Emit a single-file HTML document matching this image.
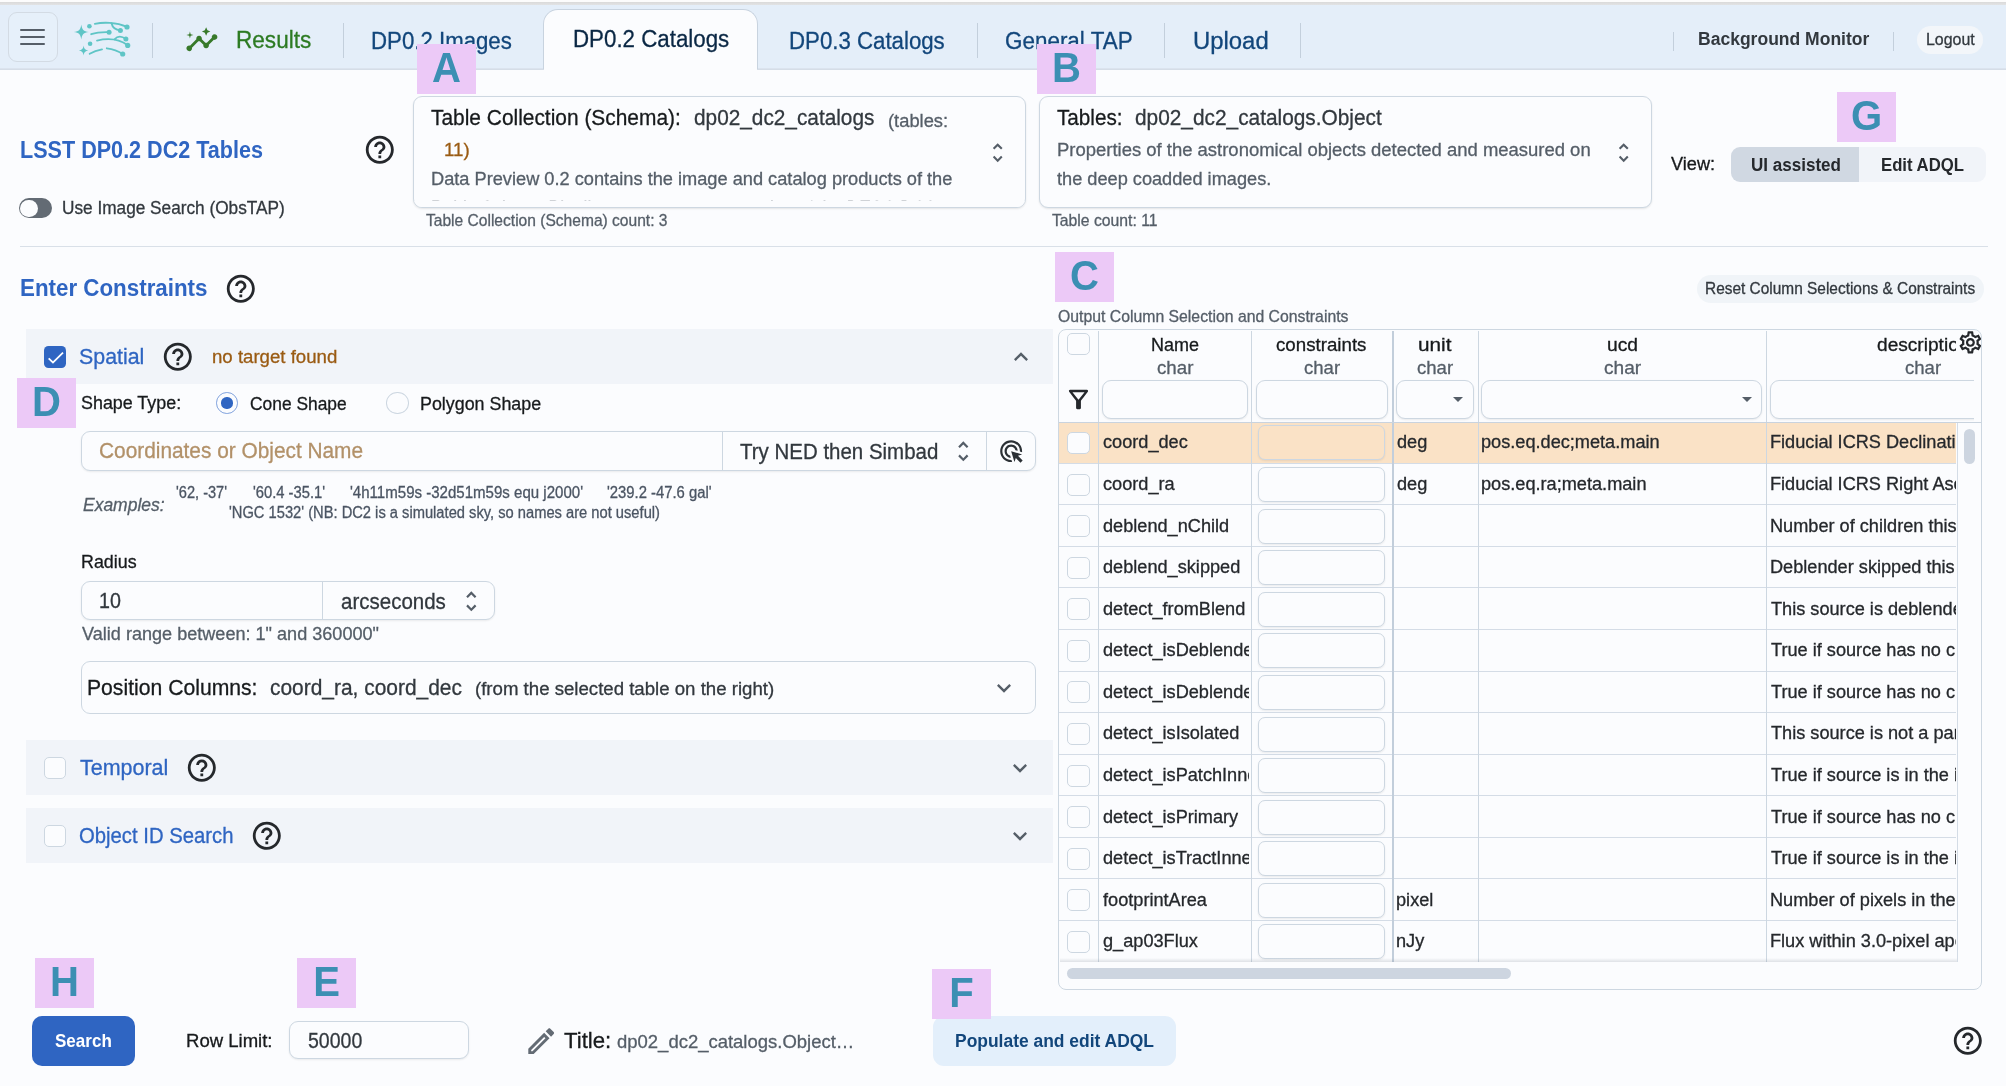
<!DOCTYPE html>
<html lang="en"><head><meta charset="utf-8"><title>LSST DP0.2 DC2 Tables</title>
<style>
html,body{margin:0;padding:0}
body{width:2006px;height:1086px;overflow:hidden;position:relative;background:#fbfcfe;font-family:"Liberation Sans",sans-serif}
.t{position:absolute;white-space:nowrap;line-height:1;transform-origin:0 0;display:block;-webkit-text-stroke:.300px currentColor}
.b,.i{position:absolute;display:block}
#topstrip{position:absolute;z-index:5;left:0;top:0;width:2006px;height:5px;background:linear-gradient(to bottom,#fcfcfc 0,#fcfcfc 1.800px,#dadada 2.200px,#e1e2e3 4.600px,#e4eef9 5px)}
#hdr{position:absolute;left:0;top:4px;width:2006px;height:64px;background:#e4eef9;border-bottom:1px solid #dbe3ee;box-sizing:content-box}
#hdr>*{margin-top:-4px}
#main{position:absolute;left:0;top:0;width:2006px;height:1086px;will-change:transform}
#hdr{will-change:transform}
.card{position:absolute;box-sizing:border-box;border:1px solid #cdd7e1;border-radius:9px;background:#fbfcfe;overflow:hidden;box-shadow:0 1px 2px rgba(21,21,21,.10)}
#tbl{position:absolute;box-sizing:border-box;border:1px solid #cdd7e1;border-radius:8px;background:#fbfcfe;overflow:hidden}
.lbl{position:absolute;background:#ecc9f7}
.lbl span{position:absolute;left:0;width:100%;text-align:center;font-weight:700;font-size:42.200px;line-height:1;color:#3c8fb3;transform:scaleX(.950);transform-origin:50% 50%}
</style></head>
<body>
<div id="topstrip"></div>
<header id="hdr">
<div class="b" style="left:8px;top:12px;width:50px;height:50px;border:1px solid #d3dbe4;border-radius:9px;box-sizing:border-box;background:#e6f0fa"></div>
<div class="b" style="left:20px;top:29px;width:25px;height:2.4px;background:#555e68;border-radius:1px"></div>
<div class="b" style="left:20px;top:35.8px;width:25px;height:2.4px;background:#555e68;border-radius:1px"></div>
<div class="b" style="left:20px;top:42.9px;width:25px;height:2.4px;background:#555e68;border-radius:1px"></div>
<svg class="i" style="left:64px;top:14px" width="80" height="50" viewBox="64 14 80 50" fill="none" stroke="#5fc5c6" stroke-width="1.850" stroke-linecap="round">
<path fill="#5fc5c6" stroke="none" d="M81.3 24.5 C82.05 29.8 83.5 31.25 88.8 32 C83.5 32.75 82.05 34.2 81.3 39.5 C80.55 34.2 79.1 32.75 73.8 32 C79.1 31.25 80.55 29.8 81.3 24.5Z"/>
<path fill="#5fc5c6" stroke="none" d="M83.6 45.6 C84.2 49 85.2 50 88.4 50.6 C85.2 51.2 84.2 52.2 83.6 55.6 C83 52.2 82 51.2 78.8 50.6 C82 50 83 49 83.6 45.6Z"/>
<circle cx="89.400" cy="26.300" r="2.300" fill="#5fc5c6" stroke="none"/>
<circle cx="90.100" cy="43.700" r="2.300" fill="#5fc5c6" stroke="none"/>
<path d="M94.800 23.900 C103 22 116 22 127 26.900"/><circle cx="127" cy="27" r="2.600" fill="#5fc5c6" stroke="none"/>
<path d="M111.500 23.200 C112.500 27.500 115 29.800 120.400 30.400"/><circle cx="120.400" cy="30.400" r="2.500" fill="#5fc5c6" stroke="none"/>
<path d="M91.200 34.200 C96 32.600 103 32 109 32.200"/><circle cx="109.100" cy="32.300" r="2.500" fill="#5fc5c6" stroke="none"/>
<path d="M97 40.600 C107 38.200 119 39 127.700 45.300"/><circle cx="127.700" cy="45.400" r="2.600" fill="#5fc5c6" stroke="none"/>
<path d="M114.500 39.300 C117.500 36 121.500 35.800 125.900 39"/><circle cx="125.900" cy="39.100" r="2.500" fill="#5fc5c6" stroke="none"/>
<path d="M89.700 53.700 C93.500 51.500 97.500 50.200 102 49.400"/>
<path d="M106.800 48.300 C112.500 49 118 50.800 122.700 54"/><circle cx="122.700" cy="54" r="2.600" fill="#5fc5c6" stroke="none"/>
</svg>
<div class="b" style="left:151.9px;top:22.5px;width:1px;height:35.5px;background:#c3cfdc"></div>
<div class="b" style="left:342.9px;top:22.5px;width:1px;height:35.5px;background:#c3cfdc"></div>
<div class="b" style="left:976.9px;top:23px;width:1px;height:35px;background:#c3cfdc"></div>
<div class="b" style="left:1163.9px;top:23px;width:1px;height:35px;background:#c3cfdc"></div>
<div class="b" style="left:1299.9px;top:23px;width:1px;height:35px;background:#c3cfdc"></div>
<div class="b" style="left:1672.9px;top:32px;width:1px;height:18.6px;background:#c3cfdc"></div>
<div class="b" style="left:1892.9px;top:32px;width:1px;height:18.6px;background:#c3cfdc"></div>
<svg class="i" style="left:185.1px;top:23.2px" width="33.8" height="33.8" viewBox="0 0 24 24" fill="#37792a" ><path d="M21 8c-1.450 0-2.260 1.440-1.930 2.510l-3.550 3.560c-.3-.09-.74-.09-1.040 0l-2.550-2.550C12.270 10.450 11.460 9 10 9c-1.450 0-2.270 1.440-1.930 2.520l-4.560 4.550C2.440 15.740 1 16.550 1 18c0 1.100.9 2 2 2 1.450 0 2.260-1.440 1.930-2.510l4.550-4.560c.3.090.74.090 1.040 0l2.550 2.550C12.730 16.550 13.540 18 15 18c1.450 0 2.270-1.440 1.930-2.520l3.560-3.550c1.070.33 2.510-.48 2.510-1.930 0-1.100-.9-2-2-2z"/><path d="M15 9l.94-2.070L18 6l-2.060-.93L15 3l-.92 2.070L12 6l2.080.93z"/><path d="M3.500 11L4 9l2-.5L4 8l-.5-2L3 8l-2 .5L3 9z"/></svg>
<span class="t" style="left:235.76px;top:28.43px;font-size:24.05px;color:#2c7a22;transform:scaleX(0.9386);">Results</span>
<span class="t" style="left:371.18px;top:28.53px;font-size:24.05px;color:#12467b;transform:scaleX(0.9244);">DP0.2 Images</span>
<div class="b" style="left:543px;top:9px;width:215px;height:61px;background:#fbfcfe;border:1px solid #c8d3df;border-bottom:none;border-radius:15px 15px 0 0;box-sizing:border-box"></div>
<span class="t" style="left:572.57px;top:27.33px;font-size:24.05px;color:#0a2744;transform:scaleX(0.9277);">DP0.2 Catalogs</span>
<span class="t" style="left:788.58px;top:28.53px;font-size:24.05px;color:#12467b;transform:scaleX(0.9247);">DP0.3 Catalogs</span>
<span class="t" style="left:1004.57px;top:28.53px;font-size:24.05px;color:#12467b;transform:scaleX(0.9329);">General TAP</span>
<span class="t" style="left:1192.71px;top:28.53px;font-size:24.05px;color:#12467b;transform:scaleX(0.9928);">Upload</span>
<span class="t" style="left:1697.74px;top:29.73px;font-size:18.25px;color:#32383e;transform:scaleX(0.9603);font-weight:700;-webkit-text-stroke:0;">Background Monitor</span>
<div class="b" style="left:1916.5px;top:26px;width:66px;height:27.6px;background:#f3f6fa;border-radius:14px"></div>
<span class="t" style="left:1925.58px;top:31.10px;font-size:17.3px;color:#32383e;transform:scaleX(0.9221);">Logout</span>
</header>
<div class="b" style="left:0px;top:69px;width:544px;height:1px;background:#d5dde7"></div>
<div class="b" style="left:757px;top:69px;width:1249px;height:1px;background:#d5dde7"></div>
<main id="main">
<span class="t" style="left:20.10px;top:137.62px;font-size:24.05px;color:#2f65c2;transform:scaleX(0.8974);font-weight:700;-webkit-text-stroke:0;">LSST DP0.2 DC2 Tables</span>
<svg class="i" style="left:363.2px;top:133.2px" width="33.6" height="33.6" viewBox="0 0 24 24" fill="#25282c" ><path d="M11 18h2v-2h-2v2zm1-16C6.48 2 2 6.48 2 12s4.48 10 10 10 10-4.48 10-10S17.52 2 12 2zm0 18c-4.41 0-8-3.59-8-8s3.59-8 8-8 8 3.59 8 8-3.59 8-8 8zm0-14c-2.21 0-4 1.79-4 4h2c0-1.1.9-2 2-2s2 .9 2 2c0 2-3 1.75-3 5h2c0-2.25 3-2.5 3-5 0-2.21-1.79-4-4-4z"/></svg>
<div class="b" style="left:19.4px;top:198.3px;width:32.5px;height:19.7px;background:#636b74;border-radius:10px"></div>
<div class="b" style="left:20.4px;top:199.5px;width:17.3px;height:17.3px;background:#fbfcfe;border-radius:50%"></div>
<span class="t" style="left:61.76px;top:198.72px;font-size:18.25px;color:#32383e;transform:scaleX(0.9440);">Use Image Search (ObsTAP)</span>
<section class="card" style="left:413px;top:96px;width:612.500px;height:111.500px">
<span class="t" style="left:17.00px;top:9.98px;font-size:21.74px;color:#171a1c;transform:scaleX(0.9618);">Table Collection (Schema):</span>
<span class="t" style="left:280.00px;top:9.98px;font-size:21.74px;color:#32383e;transform:scaleX(0.9568);">dp02_dc2_catalogs</span>
<span class="t" style="left:473.50px;top:14.72px;font-size:18.25px;color:#555e68;transform:scaleX(1.0039);">(tables:</span>
<span class="t" style="left:29.68px;top:44.42px;font-size:18.25px;color:#9a5b13;transform:scaleX(1.0242);">11)</span>
<span class="t" style="left:16.80px;top:72.72px;font-size:18.25px;color:#555e68;transform:scaleX(0.9979);">Data Preview 0.2 contains the image and catalog products of the</span>
<span class="t" style="left:16.54px;top:102.42px;font-size:18.25px;color:#555e68;transform:scaleX(0.9575);">Rubin Science Pipelines run on a reprocessing of the DESC DC2</span>
<div class="b" style="left:0px;top:104px;width:612px;height:7px;background:#fbfcfe"></div>
<svg class="i" style="left:570.8px;top:42.8px" width="25.4" height="25.4" viewBox="0 0 24 24" fill="#555e68" ><path d="M12 5.83 15.17 9l1.41-1.41L12 3 7.41 7.59 8.83 9 12 5.83zm0 12.34L8.83 15l-1.41 1.41L12 21l4.59-4.59L15.17 15 12 18.17z"/></svg>
</section>
<span class="t" style="left:426.40px;top:212.90px;font-size:15.9px;color:#555e68;transform:scaleX(0.9798);">Table Collection (Schema) count: 3</span>
<section class="card" style="left:1039px;top:96px;width:613px;height:111.500px">
<span class="t" style="left:16.80px;top:9.98px;font-size:21.74px;color:#171a1c;transform:scaleX(0.9510);">Tables:</span>
<span class="t" style="left:94.80px;top:9.98px;font-size:21.74px;color:#32383e;transform:scaleX(0.9587);">dp02_dc2_catalogs.Object</span>
<span class="t" style="left:16.99px;top:44.22px;font-size:18.25px;color:#555e68;transform:scaleX(1.0116);">Properties of the astronomical objects detected and measured on</span>
<span class="t" style="left:17.00px;top:73.22px;font-size:18.25px;color:#555e68;transform:scaleX(0.9961);">the deep coadded images.</span>
<svg class="i" style="left:570.9px;top:42.8px" width="25.4" height="25.4" viewBox="0 0 24 24" fill="#555e68" ><path d="M12 5.83 15.17 9l1.41-1.41L12 3 7.41 7.59 8.83 9 12 5.83zm0 12.34L8.83 15l-1.41 1.41L12 21l4.59-4.59L15.17 15 12 18.17z"/></svg>
</section>
<span class="t" style="left:1051.50px;top:212.90px;font-size:15.9px;color:#555e68;transform:scaleX(0.9900);">Table count: 11</span>
<span class="t" style="left:1671.00px;top:155.03px;font-size:18.25px;color:#171a1c;transform:scaleX(0.9948);">View:</span>
<div class="b" style="left:1731px;top:147.3px;width:128px;height:34.4px;background:#d0d8e2;border-radius:9px 0 0 9px"></div>
<div class="b" style="left:1859px;top:147.3px;width:127px;height:34.4px;background:#f1f4f9;border-radius:0 9px 9px 0"></div>
<span class="t" style="left:1750.57px;top:155.72px;font-size:18.25px;color:#25282c;transform:scaleX(0.9340);font-weight:700;-webkit-text-stroke:0;">UI assisted</span>
<span class="t" style="left:1881.28px;top:155.72px;font-size:18.25px;color:#25282c;transform:scaleX(0.9157);font-weight:700;-webkit-text-stroke:0;">Edit ADQL</span>
<div class="b" style="left:20px;top:245.7px;width:1968px;height:1px;background:#d9e0e8"></div>
<span class="t" style="left:20.07px;top:276.43px;font-size:24.05px;color:#2f65c2;transform:scaleX(0.9292);font-weight:700;-webkit-text-stroke:0;">Enter Constraints</span>
<svg class="i" style="left:224.2px;top:272.2px" width="33.6" height="33.6" viewBox="0 0 24 24" fill="#25282c" ><path d="M11 18h2v-2h-2v2zm1-16C6.48 2 2 6.48 2 12s4.48 10 10 10 10-4.48 10-10S17.52 2 12 2zm0 18c-4.41 0-8-3.59-8-8s3.59-8 8-8 8 3.59 8 8-3.59 8-8 8zm0-14c-2.21 0-4 1.79-4 4h2c0-1.1.9-2 2-2s2 .9 2 2c0 2-3 1.75-3 5h2c0-2.25 3-2.5 3-5 0-2.21-1.79-4-4-4z"/></svg>
<div class="b" style="left:26px;top:328.7px;width:1027px;height:55.3px;background:#f1f4f9"></div>
<div class="b" style="left:44px;top:346px;width:22px;height:22px;background:#2f65c2;border-radius:4.500px"></div>
<svg class="i" style="left:44.5px;top:346.5px" width="21.3" height="21.3" viewBox="0 0 24 24" fill="#fff" ><path d="M9 16.170 4.830 12l-1.420 1.410L9 19 21 7l-1.410-1.410z"/></svg>
<span class="t" style="left:79.00px;top:345.98px;font-size:21.74px;color:#2f65c2;transform:scaleX(0.9828);">Spatial</span>
<svg class="i" style="left:161.2px;top:340.2px" width="33.6" height="33.6" viewBox="0 0 24 24" fill="#25282c" ><path d="M11 18h2v-2h-2v2zm1-16C6.48 2 2 6.48 2 12s4.48 10 10 10 10-4.48 10-10S17.52 2 12 2zm0 18c-4.41 0-8-3.59-8-8s3.59-8 8-8 8 3.59 8 8-3.59 8-8 8zm0-14c-2.21 0-4 1.79-4 4h2c0-1.1.9-2 2-2s2 .9 2 2c0 2-3 1.75-3 5h2c0-2.25 3-2.5 3-5 0-2.21-1.79-4-4-4z"/></svg>
<span class="t" style="left:212.38px;top:348.43px;font-size:18.25px;color:#9a5b13;transform:scaleX(1.0205);">no target found</span>
<svg class="i" style="left:1006.6px;top:343px" width="28" height="28" viewBox="0 0 24 24" fill="#555e68" ><path d="M7.41 15.41 12 10.83l4.59 4.58L18 14l-6-6-6 6z"/></svg>
<span class="t" style="left:81.10px;top:393.73px;font-size:18.25px;color:#171a1c;transform:scaleX(0.9802);">Shape Type:</span>
<div class="b" style="left:216.2px;top:392.2px;width:21.6px;height:21.6px;border:1.300px solid #7ea0dc;border-radius:50%;box-sizing:border-box;background:#fbfcfe"></div>
<div class="b" style="left:221.4px;top:397.4px;width:11.2px;height:11.2px;background:#2f65c2;border-radius:50%"></div>
<span class="t" style="left:250.00px;top:394.93px;font-size:18.25px;color:#171a1c;transform:scaleX(0.9524);">Cone Shape</span>
<div class="b" style="left:386.2px;top:392.2px;width:22.5px;height:21.6px;border:1.300px solid #cdd7e1;border-radius:50%;box-sizing:border-box;background:#fbfcfe"></div>
<span class="t" style="left:420.02px;top:394.93px;font-size:18.25px;color:#171a1c;transform:scaleX(0.9784);">Polygon Shape</span>
<div class="b" style="left:81px;top:431px;width:955px;height:39.5px;border:1px solid #cdd7e1;border-radius:9px;box-sizing:border-box;background:#fbfcfe;box-shadow:0 1px 2px rgba(21,21,21,.08)"></div>
<div class="b" style="left:722px;top:431.5px;width:1px;height:38.5px;background:#cdd7e1"></div>
<div class="b" style="left:986px;top:431.5px;width:1px;height:38.5px;background:#cdd7e1"></div>
<span class="t" style="left:98.74px;top:439.98px;font-size:21.74px;color:#b29169;transform:scaleX(0.9587);">Coordinates or Object Name</span>
<span class="t" style="left:740.20px;top:440.98px;font-size:21.74px;color:#32383e;transform:scaleX(0.9418);">Try NED then Simbad</span>
<svg class="i" style="left:950px;top:438.4px" width="26.6" height="26.6" viewBox="0 0 24 24" fill="#555e68" ><path d="M12 5.83 15.17 9l1.41-1.41L12 3 7.41 7.59 8.83 9 12 5.83zm0 12.34L8.83 15l-1.41 1.41L12 21l4.59-4.59L15.17 15 12 18.17z"/></svg>
<svg class="i" style="left:998.2px;top:437.9px" width="26.3" height="26.3" viewBox="0 0 24 24" fill="#2b3035" ><path d="M11.710 17.990C8.530 17.840 6 15.220 6 12c0-3.310 2.690-6 6-6 3.220 0 5.840 2.530 5.990 5.710l-2.100-.630C15.480 9.310 13.890 8 12 8c-2.210 0-4 1.790-4 4 0 1.890 1.310 3.480 3.080 3.890l.630 2.100zM22 12c0 .3-.010.6-.040.9l-1.970-.590c.010-.1.010-.210.010-.310 0-4.420-3.580-8-8-8s-8 3.580-8 8 3.580 8 8 8c.1 0 .210 0 .310-.010l.590 1.970c-.3.030-.6.040-.9.040-5.520 0-10-4.480-10-10S6.480 2 12 2s10 4.480 10 10zm-3.770 4.260L22 15l-10-3 3 10 1.260-3.770 4.270 4.270 1.980-1.980-4.280-4.260z"/></svg>
<span class="t" style="left:83.00px;top:495.73px;font-size:18.25px;color:#555e68;transform:scaleX(0.9574);font-style:italic;">Examples:</span>
<span class="t" style="left:176.40px;top:484.95px;font-size:15.8px;color:#4b5563;transform:scaleX(0.9240);">'62, -37'</span>
<span class="t" style="left:253.00px;top:484.95px;font-size:15.8px;color:#4b5563;transform:scaleX(0.9332);">'60.4 -35.1'</span>
<span class="t" style="left:350.00px;top:484.95px;font-size:15.8px;color:#4b5563;transform:scaleX(0.9526);">'4h11m59s -32d51m59s equ j2000'</span>
<span class="t" style="left:606.90px;top:484.95px;font-size:15.8px;color:#4b5563;transform:scaleX(0.9380);">'239.2 -47.6 gal'</span>
<span class="t" style="left:228.80px;top:504.95px;font-size:15.8px;color:#4b5563;transform:scaleX(0.9305);">'NGC 1532' (NB: DC2 is a simulated sky, so names are not useful)</span>
<span class="t" style="left:81.02px;top:552.73px;font-size:18.25px;color:#171a1c;transform:scaleX(0.9787);">Radius</span>
<div class="b" style="left:81px;top:581px;width:414px;height:39px;border:1px solid #cdd7e1;border-radius:9px;box-sizing:border-box;background:#fbfcfe;box-shadow:0 1px 2px rgba(21,21,21,.08)"></div>
<div class="b" style="left:322px;top:581.5px;width:1px;height:38px;background:#cdd7e1"></div>
<span class="t" style="left:99.09px;top:590.60px;font-size:21.5px;color:#32383e;transform:scaleX(0.9147);">10</span>
<span class="t" style="left:341.00px;top:590.98px;font-size:21.74px;color:#32383e;transform:scaleX(0.9436);">arcseconds</span>
<svg class="i" style="left:457.7px;top:587.7px" width="26.6" height="26.6" viewBox="0 0 24 24" fill="#555e68" ><path d="M12 5.83 15.17 9l1.41-1.41L12 3 7.41 7.59 8.83 9 12 5.83zm0 12.34L8.83 15l-1.41 1.41L12 21l4.59-4.59L15.17 15 12 18.17z"/></svg>
<span class="t" style="left:82.00px;top:624.73px;font-size:18.25px;color:#555e68;transform:scaleX(0.9906);">Valid range between: 1" and 360000"</span>
<div class="b" style="left:81px;top:661px;width:955px;height:52.7px;border:1px solid #cdd7e1;border-radius:9px;box-sizing:border-box;background:#fbfcfe"></div>
<span class="t" style="left:87.03px;top:677.48px;font-size:21.74px;color:#171a1c;transform:scaleX(0.9733);">Position Columns:</span>
<span class="t" style="left:269.80px;top:677.48px;font-size:21.74px;color:#32383e;transform:scaleX(0.9625);">coord_ra, coord_dec</span>
<span class="t" style="left:474.98px;top:680.02px;font-size:18.25px;color:#32383e;transform:scaleX(1.0203);">(from the selected table on the right)</span>
<svg class="i" style="left:990px;top:673.5px" width="28" height="28" viewBox="0 0 24 24" fill="#555e68" ><path d="M7.41 8.59 12 13.17l4.59-4.58L18 10l-6 6-6-6 1.41-1.41z"/></svg>
<div class="b" style="left:26px;top:740.3px;width:1027px;height:54.6px;background:#f1f4f9"></div>
<div class="b" style="left:44px;top:757px;width:22px;height:22px;border:1px solid #cdd7e1;border-radius:5px;box-sizing:border-box;background:#fbfcfe"></div>
<span class="t" style="left:80.00px;top:756.98px;font-size:21.74px;color:#2f65c2;transform:scaleX(0.9880);">Temporal</span>
<svg class="i" style="left:185.1px;top:750.7px" width="33.6" height="33.6" viewBox="0 0 24 24" fill="#25282c" ><path d="M11 18h2v-2h-2v2zm1-16C6.48 2 2 6.48 2 12s4.48 10 10 10 10-4.48 10-10S17.52 2 12 2zm0 18c-4.41 0-8-3.59-8-8s3.59-8 8-8 8 3.59 8 8-3.59 8-8 8zm0-14c-2.21 0-4 1.79-4 4h2c0-1.1.9-2 2-2s2 .9 2 2c0 2-3 1.75-3 5h2c0-2.25 3-2.5 3-5 0-2.21-1.79-4-4-4z"/></svg>
<svg class="i" style="left:1006.2px;top:753.7px" width="28" height="28" viewBox="0 0 24 24" fill="#555e68" ><path d="M7.41 8.59 12 13.17l4.59-4.58L18 10l-6 6-6-6 1.41-1.41z"/></svg>
<div class="b" style="left:26px;top:808.3px;width:1027px;height:54.6px;background:#f1f4f9"></div>
<div class="b" style="left:44px;top:825.3px;width:22px;height:22px;border:1px solid #cdd7e1;border-radius:5px;box-sizing:border-box;background:#fbfcfe"></div>
<span class="t" style="left:79.07px;top:824.98px;font-size:21.74px;color:#2f65c2;transform:scaleX(0.9333);">Object ID Search</span>
<svg class="i" style="left:250.1px;top:819.2px" width="33.6" height="33.6" viewBox="0 0 24 24" fill="#25282c" ><path d="M11 18h2v-2h-2v2zm1-16C6.48 2 2 6.48 2 12s4.48 10 10 10 10-4.48 10-10S17.52 2 12 2zm0 18c-4.41 0-8-3.59-8-8s3.59-8 8-8 8 3.59 8 8-3.59 8-8 8zm0-14c-2.21 0-4 1.79-4 4h2c0-1.1.9-2 2-2s2 .9 2 2c0 2-3 1.75-3 5h2c0-2.25 3-2.5 3-5 0-2.21-1.79-4-4-4z"/></svg>
<svg class="i" style="left:1006.2px;top:821.7px" width="28" height="28" viewBox="0 0 24 24" fill="#555e68" ><path d="M7.41 8.59 12 13.17l4.59-4.58L18 10l-6 6-6-6 1.41-1.41z"/></svg>
<div class="b" style="left:32px;top:1016px;width:103px;height:50px;background:#2f65c2;border-radius:10px"></div>
<span class="t" style="left:54.80px;top:1032.05px;font-size:18.6px;color:#fff;transform:scaleX(0.9163);font-weight:700;-webkit-text-stroke:0;">Search</span>
<span class="t" style="left:186.38px;top:1032.22px;font-size:18.25px;color:#171a1c;transform:scaleX(1.0155);">Row Limit:</span>
<div class="b" style="left:289px;top:1021px;width:180px;height:38px;border:1px solid #cdd7e1;border-radius:9px;box-sizing:border-box;background:#fbfcfe;box-shadow:0 1px 2px rgba(21,21,21,.08)"></div>
<span class="t" style="left:307.70px;top:1030.60px;font-size:21.5px;color:#32383e;transform:scaleX(0.9076);">50000</span>
<svg class="i" style="left:524.4px;top:1023.6px" width="34.4" height="34.4" viewBox="0 0 24 24" fill="#636b74" ><path d="M14.06 9.02l.92.92L5.92 19H5v-.92l9.06-9.06M17.66 3c-.25 0-.51.1-.7.29l-1.83 1.83 3.75 3.75 1.83-1.83c.39-.39.39-1.02 0-1.41l-2.34-2.34c-.2-.2-.45-.29-.71-.29zm-3.6 3.19L3 17.25V21h3.75L17.81 9.94l-3.75-3.75z"/></svg>
<span class="t" style="left:564.30px;top:1029.98px;font-size:21.74px;color:#171a1c;transform:scaleX(1.0209);">Title:</span>
<span class="t" style="left:616.50px;top:1032.72px;font-size:18.25px;color:#555e68;transform:scaleX(1.0124);">dp02_dc2_catalogs.Object…</span>
<div class="b" style="left:933px;top:1016px;width:243px;height:50px;background:#e3effb;border-radius:11px"></div>
<span class="t" style="left:954.54px;top:1032.22px;font-size:18.25px;color:#12467b;transform:scaleX(0.9556);font-weight:700;-webkit-text-stroke:0;">Populate and edit ADQL</span>
<svg class="i" style="left:1951.2px;top:1023.9px" width="33.6" height="33.6" viewBox="0 0 24 24" fill="#25282c" ><path d="M11 18h2v-2h-2v2zm1-16C6.48 2 2 6.48 2 12s4.48 10 10 10 10-4.48 10-10S17.52 2 12 2zm0 18c-4.41 0-8-3.59-8-8s3.59-8 8-8 8 3.59 8 8-3.59 8-8 8zm0-14c-2.21 0-4 1.79-4 4h2c0-1.1.9-2 2-2s2 .9 2 2c0 2-3 1.75-3 5h2c0-2.25 3-2.5 3-5 0-2.21-1.79-4-4-4z"/></svg>
<span class="t" style="left:1058.00px;top:309.40px;font-size:15.9px;color:#555e68;transform:scaleX(0.9934);">Output Column Selection and Constraints</span>
<div class="b" style="left:1697px;top:275px;width:287.3px;height:28px;background:#f0f4f8;border-radius:14px"></div>
<span class="t" style="left:1705.03px;top:281.40px;font-size:15.9px;color:#32383e;transform:scaleX(0.9709);">Reset Column Selections &amp; Constraints</span>
<section id="tbl" style="left:1058px;top:329px;width:924px;height:660.5px">
<div class="b" style="left:39px;top:0.5px;width:1px;height:631.2px;background:#cdd7e1"></div>
<div class="b" style="left:192px;top:0.5px;width:1px;height:631.2px;background:#cdd7e1"></div>
<div class="b" style="left:332.5px;top:0.5px;width:2px;height:631.2px;background:#c2cedb"></div>
<div class="b" style="left:419px;top:0.5px;width:1px;height:631.2px;background:#cdd7e1"></div>
<div class="b" style="left:707px;top:0.5px;width:1px;height:631.2px;background:#cdd7e1"></div>
<div class="b" style="left:8px;top:3px;width:22.5px;height:22px;border:1px solid #cdd7e1;border-radius:5px;box-sizing:border-box;background:#fbfcfe"></div>
<svg class="i" style="left:5.3px;top:55px" width="29" height="29" viewBox="0 0 24 24" fill="#25282c" ><path d="M7 6h10l-5.010 6.300L7 6zm-2.750-.390C6.270 8.200 10 13 10 13v6c0 .550.450 1 1 1h2c.550 0 1-.450 1-1v-6s3.720-4.800 5.740-7.390c.510-.660.040-1.610-.790-1.610H5.040c-.830 0-1.300.950-.790 1.610z"/></svg>
<span class="t" style="left:91.71px;top:5.73px;font-size:18.25px;color:#171a1c;transform:scaleX(0.9867);">Name</span>
<span class="t" style="left:97.50px;top:28.73px;font-size:18.25px;color:#555e68;transform:scaleX(1.0247);">char</span>
<span class="t" style="left:217.20px;top:5.73px;font-size:18.25px;color:#171a1c;transform:scaleX(1.0247);">constraints</span>
<span class="t" style="left:245.00px;top:28.73px;font-size:18.25px;color:#555e68;transform:scaleX(1.0162);">char</span>
<span class="t" style="left:359.16px;top:5.73px;font-size:18.25px;color:#171a1c;transform:scaleX(1.1356);">unit</span>
<span class="t" style="left:358.00px;top:28.73px;font-size:18.25px;color:#555e68;transform:scaleX(1.0162);">char</span>
<span class="t" style="left:547.64px;top:5.73px;font-size:18.25px;color:#171a1c;transform:scaleX(1.0559);">ucd</span>
<span class="t" style="left:545.00px;top:28.73px;font-size:18.25px;color:#555e68;transform:scaleX(1.0445);">char</span>
<div class="b" style="left:709px;top:0;width:188px;height:60px;overflow:hidden">
<span class="t" style="left:109.30px;top:5.73px;font-size:18.25px;color:#171a1c;transform:scaleX(1.0470);">description</span>
<span class="t" style="left:137.10px;top:28.73px;font-size:18.25px;color:#555e68;transform:scaleX(1.0162);">char</span>
</div>
<svg class="i" style="left:897.8px;top:-0.6px" width="26.8" height="26.8" viewBox="0 0 24 24" fill="#25282c" ><path d="M19.43 12.98c.04-.32.07-.64.07-.98 0-.34-.03-.66-.07-.98l2.11-1.65c.19-.15.24-.42.12-.64l-2-3.46c-.09-.16-.26-.25-.44-.25-.06 0-.12.01-.17.03l-2.49 1c-.52-.4-1.08-.73-1.69-.98l-.38-2.65C14.46 2.18 14.25 2 14 2h-4c-.25 0-.46.18-.49.42l-.38 2.65c-.61.25-1.17.59-1.69.98l-2.49-1c-.06-.02-.12-.03-.18-.03-.17 0-.34.09-.43.25l-2 3.46c-.13.22-.07.49.12.64l2.11 1.65c-.04.32-.07.65-.07.98 0 .33.03.66.07.98l-2.11 1.65c-.19.15-.24.42-.12.64l2 3.46c.09.16.26.25.44.25.06 0 .12-.01.17-.03l2.49-1c.52.4 1.08.73 1.69.98l.38 2.65c.03.24.24.42.49.42h4c.25 0 .46-.18.49-.42l.38-2.65c.61-.25 1.17-.59 1.69-.98l2.49 1c.06.02.12.03.18.03.17 0 .34-.09.43-.25l2-3.46c.12-.22.07-.49-.12-.64l-2.11-1.65zm-1.98-1.71c.04.31.05.52.05.73 0 .21-.02.43-.05.73l-.14 1.13.89.7 1.08.84-.7 1.21-1.27-.51-1.04-.42-.9.68c-.43.32-.84.56-1.25.73l-1.06.43-.16 1.13-.2 1.35h-1.4l-.19-1.35-.16-1.13-1.06-.43c-.43-.18-.83-.41-1.23-.71l-.91-.7-1.06.43-1.27.51-.7-1.21 1.08-.84.89-.7-.14-1.13c-.03-.31-.05-.54-.05-.74s.02-.43.05-.73l.14-1.13-.89-.7-1.08-.84.7-1.21 1.27.51 1.04.42.9-.68c.43-.32.84-.56 1.25-.73l1.06-.43.16-1.13.2-1.35h1.39l.19 1.35.16 1.13 1.06.43c.43.18.83.41 1.23.71l.91.7 1.06-.43 1.27-.51.7 1.21-1.07.85-.89.7.14 1.13zM12 8c-2.21 0-4 1.79-4 4s1.790 4 4 4 4-1.790 4-4-1.790-4-4-4zm0 6c-1.100 0-2-.9-2-2s.9-2 2-2 2 .9 2 2-.9 2-2 2z"/></svg>
<div class="b" style="left:42.5px;top:50px;width:146px;height:39px;border:1px solid #cdd7e1;border-radius:9px;box-sizing:border-box;background:#fbfcfe;box-shadow:0 1px 2px rgba(21,21,21,.08)"></div>
<div class="b" style="left:196.5px;top:50px;width:132.5px;height:39px;border:1px solid #cdd7e1;border-radius:9px;box-sizing:border-box;background:#fbfcfe;box-shadow:0 1px 2px rgba(21,21,21,.08)"></div>
<div class="b" style="left:337px;top:50px;width:78px;height:39px;border:1px solid #cdd7e1;border-radius:9px;box-sizing:border-box;background:#fbfcfe;box-shadow:0 1px 2px rgba(21,21,21,.08)"></div>
<svg class="i" style="left:387.3px;top:57.2px" width="24" height="24" viewBox="0 0 24 24" fill="#555e68" ><path d="M7 10l5 5 5-5z"/></svg>
<div class="b" style="left:422px;top:50px;width:280.5px;height:39px;border:1px solid #cdd7e1;border-radius:9px;box-sizing:border-box;background:#fbfcfe;box-shadow:0 1px 2px rgba(21,21,21,.08)"></div>
<svg class="i" style="left:675.8px;top:57.2px" width="24" height="24" viewBox="0 0 24 24" fill="#555e68" ><path d="M7 10l5 5 5-5z"/></svg>
<div class="b" style="left:709px;top:49px;width:205.5px;height:42px;overflow:hidden">
<div class="b" style="left:2px;top:1px;width:230px;height:39px;border:1px solid #cdd7e1;border-radius:9px;box-sizing:border-box;background:#fbfcfe;box-shadow:0 1px 2px rgba(21,21,21,.08)"></div>
</div>
<div class="b" style="left:0px;top:92px;width:922px;height:1px;background:#c9d3de"></div>
<div class="b" id="tbody" style="left:0;top:93px;width:897.3px;height:538.7px;overflow:hidden">
<div class="b" style="left:0px;top:-0.93px;width:900px;height:40.577px;background:#fae2c6"></div>
<div class="b" style="left:0px;top:39.647px;width:900px;height:1px;background:#d4dce6"></div>
<div class="b" style="left:8px;top:8.97px;width:22.5px;height:22px;border:1px solid #cdd7e1;border-radius:5px;box-sizing:border-box;background:#fbfcfe"></div>
<div class="b" style="left:198.7px;top:2.47px;width:127.6px;height:35px;border:1px solid #cdd7e1;border-radius:7px;box-sizing:border-box;background:#fae2c6;box-shadow:0 1px 2px rgba(21,21,21,.08)"></div>
<div class="b" style="left:41px;top:-0.93px;width:148.5px;height:40.577px;overflow:hidden">
<span class="t" style="left:2.50px;top:11.38px;font-size:18.25px;color:#25282c;transform:scaleX(0.9947);">coord_dec</span>
</div>
<span class="t" style="left:338.00px;top:10.44px;font-size:18.25px;color:#25282c;transform:scaleX(0.9947);">deg</span>
<span class="t" style="left:422.31px;top:10.44px;font-size:18.25px;color:#25282c;transform:scaleX(0.9947);">pos.eq.dec;meta.main</span>
<span class="t" style="left:711.01px;top:10.44px;font-size:18.25px;color:#25282c;transform:scaleX(0.9947);">Fiducial ICRS Declination of centroid used for database indexing</span>
<div class="b" style="left:0px;top:81.224px;width:900px;height:1px;background:#d4dce6"></div>
<div class="b" style="left:8px;top:50.547px;width:22.5px;height:22px;border:1px solid #cdd7e1;border-radius:5px;box-sizing:border-box;background:#fbfcfe"></div>
<div class="b" style="left:198.7px;top:44.047px;width:127.6px;height:35px;border:1px solid #cdd7e1;border-radius:7px;box-sizing:border-box;background:#fbfcfe;box-shadow:0 1px 2px rgba(21,21,21,.08)"></div>
<div class="b" style="left:41px;top:40.647px;width:148.5px;height:40.577px;overflow:hidden">
<span class="t" style="left:2.50px;top:11.38px;font-size:18.25px;color:#25282c;transform:scaleX(0.9947);">coord_ra</span>
</div>
<span class="t" style="left:338.00px;top:52.02px;font-size:18.25px;color:#25282c;transform:scaleX(0.9947);">deg</span>
<span class="t" style="left:422.31px;top:52.02px;font-size:18.25px;color:#25282c;transform:scaleX(0.9947);">pos.eq.ra;meta.main</span>
<span class="t" style="left:711.01px;top:52.02px;font-size:18.25px;color:#25282c;transform:scaleX(0.9947);">Fiducial ICRS Right Ascension of centroid used for database indexing</span>
<div class="b" style="left:0px;top:122.801px;width:900px;height:1px;background:#d4dce6"></div>
<div class="b" style="left:8px;top:92.124px;width:22.5px;height:22px;border:1px solid #cdd7e1;border-radius:5px;box-sizing:border-box;background:#fbfcfe"></div>
<div class="b" style="left:198.7px;top:85.624px;width:127.6px;height:35px;border:1px solid #cdd7e1;border-radius:7px;box-sizing:border-box;background:#fbfcfe;box-shadow:0 1px 2px rgba(21,21,21,.08)"></div>
<div class="b" style="left:41px;top:82.224px;width:148.5px;height:40.577px;overflow:hidden">
<span class="t" style="left:2.50px;top:11.38px;font-size:18.25px;color:#25282c;transform:scaleX(0.9947);">deblend_nChild</span>
</div>
<span class="t" style="left:711.01px;top:93.60px;font-size:18.25px;color:#25282c;transform:scaleX(0.9947);">Number of children this object has (defaults to 0)</span>
<div class="b" style="left:0px;top:164.378px;width:900px;height:1px;background:#d4dce6"></div>
<div class="b" style="left:8px;top:133.701px;width:22.5px;height:22px;border:1px solid #cdd7e1;border-radius:5px;box-sizing:border-box;background:#fbfcfe"></div>
<div class="b" style="left:198.7px;top:127.201px;width:127.6px;height:35px;border:1px solid #cdd7e1;border-radius:7px;box-sizing:border-box;background:#fbfcfe;box-shadow:0 1px 2px rgba(21,21,21,.08)"></div>
<div class="b" style="left:41px;top:123.801px;width:148.5px;height:40.577px;overflow:hidden">
<span class="t" style="left:2.50px;top:11.38px;font-size:18.25px;color:#25282c;transform:scaleX(0.9947);">deblend_skipped</span>
</div>
<span class="t" style="left:711.01px;top:135.18px;font-size:18.25px;color:#25282c;transform:scaleX(0.9947);">Deblender skipped this source</span>
<div class="b" style="left:0px;top:205.955px;width:900px;height:1px;background:#d4dce6"></div>
<div class="b" style="left:8px;top:175.278px;width:22.5px;height:22px;border:1px solid #cdd7e1;border-radius:5px;box-sizing:border-box;background:#fbfcfe"></div>
<div class="b" style="left:198.7px;top:168.778px;width:127.6px;height:35px;border:1px solid #cdd7e1;border-radius:7px;box-sizing:border-box;background:#fbfcfe;box-shadow:0 1px 2px rgba(21,21,21,.08)"></div>
<div class="b" style="left:41px;top:165.378px;width:148.5px;height:40.577px;overflow:hidden">
<span class="t" style="left:2.50px;top:11.38px;font-size:18.25px;color:#25282c;transform:scaleX(0.9947);">detect_fromBlend</span>
</div>
<span class="t" style="left:712.00px;top:176.75px;font-size:18.25px;color:#25282c;transform:scaleX(0.9947);">This source is deblended from a parent with more than one child.</span>
<div class="b" style="left:0px;top:247.532px;width:900px;height:1px;background:#d4dce6"></div>
<div class="b" style="left:8px;top:216.855px;width:22.5px;height:22px;border:1px solid #cdd7e1;border-radius:5px;box-sizing:border-box;background:#fbfcfe"></div>
<div class="b" style="left:198.7px;top:210.355px;width:127.6px;height:35px;border:1px solid #cdd7e1;border-radius:7px;box-sizing:border-box;background:#fbfcfe;box-shadow:0 1px 2px rgba(21,21,21,.08)"></div>
<div class="b" style="left:41px;top:206.955px;width:148.5px;height:40.577px;overflow:hidden">
<span class="t" style="left:2.50px;top:11.38px;font-size:18.25px;color:#25282c;transform:scaleX(0.9947);">detect_isDeblendedModelSource</span>
</div>
<span class="t" style="left:712.00px;top:218.33px;font-size:18.25px;color:#25282c;transform:scaleX(0.9947);">True if source has no children and is in the inner region of a coadd patch</span>
<div class="b" style="left:0px;top:289.109px;width:900px;height:1px;background:#d4dce6"></div>
<div class="b" style="left:8px;top:258.432px;width:22.5px;height:22px;border:1px solid #cdd7e1;border-radius:5px;box-sizing:border-box;background:#fbfcfe"></div>
<div class="b" style="left:198.7px;top:251.932px;width:127.6px;height:35px;border:1px solid #cdd7e1;border-radius:7px;box-sizing:border-box;background:#fbfcfe;box-shadow:0 1px 2px rgba(21,21,21,.08)"></div>
<div class="b" style="left:41px;top:248.532px;width:148.5px;height:40.577px;overflow:hidden">
<span class="t" style="left:2.50px;top:11.38px;font-size:18.25px;color:#25282c;transform:scaleX(0.9947);">detect_isDeblendedSource</span>
</div>
<span class="t" style="left:712.00px;top:259.91px;font-size:18.25px;color:#25282c;transform:scaleX(0.9947);">True if source has no children and is in the inner region of a coadd patch</span>
<div class="b" style="left:0px;top:330.686px;width:900px;height:1px;background:#d4dce6"></div>
<div class="b" style="left:8px;top:300.009px;width:22.5px;height:22px;border:1px solid #cdd7e1;border-radius:5px;box-sizing:border-box;background:#fbfcfe"></div>
<div class="b" style="left:198.7px;top:293.509px;width:127.6px;height:35px;border:1px solid #cdd7e1;border-radius:7px;box-sizing:border-box;background:#fbfcfe;box-shadow:0 1px 2px rgba(21,21,21,.08)"></div>
<div class="b" style="left:41px;top:290.109px;width:148.5px;height:40.577px;overflow:hidden">
<span class="t" style="left:2.50px;top:11.38px;font-size:18.25px;color:#25282c;transform:scaleX(0.9947);">detect_isIsolated</span>
</div>
<span class="t" style="left:712.00px;top:301.48px;font-size:18.25px;color:#25282c;transform:scaleX(0.9947);">This source is not a part of a blend.</span>
<div class="b" style="left:0px;top:372.263px;width:900px;height:1px;background:#d4dce6"></div>
<div class="b" style="left:8px;top:341.586px;width:22.5px;height:22px;border:1px solid #cdd7e1;border-radius:5px;box-sizing:border-box;background:#fbfcfe"></div>
<div class="b" style="left:198.7px;top:335.086px;width:127.6px;height:35px;border:1px solid #cdd7e1;border-radius:7px;box-sizing:border-box;background:#fbfcfe;box-shadow:0 1px 2px rgba(21,21,21,.08)"></div>
<div class="b" style="left:41px;top:331.686px;width:148.5px;height:40.577px;overflow:hidden">
<span class="t" style="left:2.50px;top:11.38px;font-size:18.25px;color:#25282c;transform:scaleX(0.9947);">detect_isPatchInner</span>
</div>
<span class="t" style="left:712.00px;top:343.06px;font-size:18.25px;color:#25282c;transform:scaleX(0.9947);">True if source is in the inner region of a coadd patch</span>
<div class="b" style="left:0px;top:413.84px;width:900px;height:1px;background:#d4dce6"></div>
<div class="b" style="left:8px;top:383.163px;width:22.5px;height:22px;border:1px solid #cdd7e1;border-radius:5px;box-sizing:border-box;background:#fbfcfe"></div>
<div class="b" style="left:198.7px;top:376.663px;width:127.6px;height:35px;border:1px solid #cdd7e1;border-radius:7px;box-sizing:border-box;background:#fbfcfe;box-shadow:0 1px 2px rgba(21,21,21,.08)"></div>
<div class="b" style="left:41px;top:373.263px;width:148.5px;height:40.577px;overflow:hidden">
<span class="t" style="left:2.50px;top:11.38px;font-size:18.25px;color:#25282c;transform:scaleX(0.9947);">detect_isPrimary</span>
</div>
<span class="t" style="left:712.00px;top:384.64px;font-size:18.25px;color:#25282c;transform:scaleX(0.9947);">True if source has no children and is in the inner region of a coadd patch</span>
<div class="b" style="left:0px;top:455.417px;width:900px;height:1px;background:#d4dce6"></div>
<div class="b" style="left:8px;top:424.74px;width:22.5px;height:22px;border:1px solid #cdd7e1;border-radius:5px;box-sizing:border-box;background:#fbfcfe"></div>
<div class="b" style="left:198.7px;top:418.24px;width:127.6px;height:35px;border:1px solid #cdd7e1;border-radius:7px;box-sizing:border-box;background:#fbfcfe;box-shadow:0 1px 2px rgba(21,21,21,.08)"></div>
<div class="b" style="left:41px;top:414.84px;width:148.5px;height:40.577px;overflow:hidden">
<span class="t" style="left:2.50px;top:11.38px;font-size:18.25px;color:#25282c;transform:scaleX(0.9947);">detect_isTractInner</span>
</div>
<span class="t" style="left:712.00px;top:426.21px;font-size:18.25px;color:#25282c;transform:scaleX(0.9947);">True if source is in the inner region of a coadd tract</span>
<div class="b" style="left:0px;top:496.994px;width:900px;height:1px;background:#d4dce6"></div>
<div class="b" style="left:8px;top:466.317px;width:22.5px;height:22px;border:1px solid #cdd7e1;border-radius:5px;box-sizing:border-box;background:#fbfcfe"></div>
<div class="b" style="left:198.7px;top:459.817px;width:127.6px;height:35px;border:1px solid #cdd7e1;border-radius:7px;box-sizing:border-box;background:#fbfcfe;box-shadow:0 1px 2px rgba(21,21,21,.08)"></div>
<div class="b" style="left:41px;top:456.417px;width:148.5px;height:40.577px;overflow:hidden">
<span class="t" style="left:2.50px;top:11.38px;font-size:18.25px;color:#25282c;transform:scaleX(0.9947);">footprintArea</span>
</div>
<span class="t" style="left:337.01px;top:467.79px;font-size:18.25px;color:#25282c;transform:scaleX(0.9947);">pixel</span>
<span class="t" style="left:711.01px;top:467.79px;font-size:18.25px;color:#25282c;transform:scaleX(0.9947);">Number of pixels in the source's detection footprint.</span>
<div class="b" style="left:0px;top:538.571px;width:900px;height:1px;background:#d4dce6"></div>
<div class="b" style="left:8px;top:507.894px;width:22.5px;height:22px;border:1px solid #cdd7e1;border-radius:5px;box-sizing:border-box;background:#fbfcfe"></div>
<div class="b" style="left:198.7px;top:501.394px;width:127.6px;height:35px;border:1px solid #cdd7e1;border-radius:7px;box-sizing:border-box;background:#fbfcfe;box-shadow:0 1px 2px rgba(21,21,21,.08)"></div>
<div class="b" style="left:41px;top:497.994px;width:148.5px;height:40.577px;overflow:hidden">
<span class="t" style="left:2.50px;top:11.38px;font-size:18.25px;color:#25282c;transform:scaleX(0.9947);">g_ap03Flux</span>
</div>
<span class="t" style="left:337.01px;top:509.37px;font-size:18.25px;color:#25282c;transform:scaleX(0.9947);">nJy</span>
<span class="t" style="left:711.01px;top:509.37px;font-size:18.25px;color:#25282c;transform:scaleX(0.9947);">Flux within 3.0-pixel aperture</span>
<div class="b" style="left:39px;top:0px;width:1px;height:540px;background:#cdd7e1"></div>
<div class="b" style="left:192px;top:0px;width:1px;height:540px;background:#cdd7e1"></div>
<div class="b" style="left:332.5px;top:0px;width:2px;height:540px;background:#c2cedb"></div>
<div class="b" style="left:419px;top:0px;width:1px;height:540px;background:#cdd7e1"></div>
<div class="b" style="left:707px;top:0px;width:1px;height:540px;background:#cdd7e1"></div>
</div>
<div class="b" style="left:0.5px;top:627.7px;width:898px;height:4px;background:linear-gradient(to bottom, rgba(120,130,145,0), rgba(120,130,145,.22))"></div>
<div class="b" style="left:897.5px;top:93px;width:1px;height:538.7px;background:#d4dce6"></div>
<div class="b" style="left:905px;top:99.3px;width:10.5px;height:35px;background:#cdd5e0;border-radius:6px"></div>
<div class="b" style="left:7.5px;top:638px;width:444.5px;height:10.7px;background:#cdd5e0;border-radius:6px"></div>
</section>
<div class="lbl" style="left:417px;top:44px;width:59px;height:50px"><span style="top:3.2px">A</span></div>
<div class="lbl" style="left:1037px;top:44px;width:59px;height:49.5px"><span style="top:3.2px">B</span></div>
<div class="lbl" style="left:1837px;top:91.7px;width:59px;height:50px"><span style="top:3.2px">G</span></div>
<div class="lbl" style="left:1055px;top:252px;width:59px;height:50px"><span style="top:3.2px">C</span></div>
<div class="lbl" style="left:17px;top:378px;width:59px;height:50px"><span style="top:3.2px">D</span></div>
<div class="lbl" style="left:35px;top:957.5px;width:59px;height:50px"><span style="top:3.2px">H</span></div>
<div class="lbl" style="left:297px;top:957.5px;width:59px;height:50px"><span style="top:3.2px">E</span></div>
<div class="lbl" style="left:932px;top:968.7px;width:59px;height:50px"><span style="top:3.2px">F</span></div>
</main>
</body></html>
